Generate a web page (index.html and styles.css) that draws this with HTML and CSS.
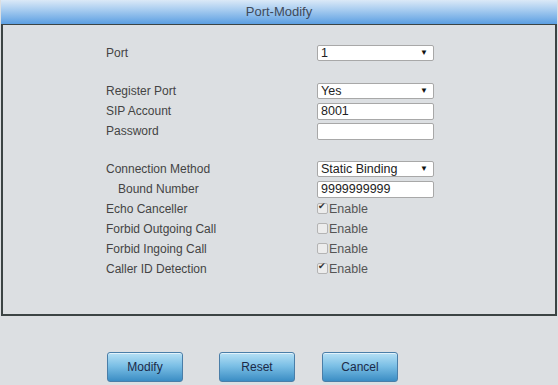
FILE: index.html
```html
<!DOCTYPE html>
<html lang="en">
<head>
  <meta charset="UTF-8" />
  <title>Port-Modify</title>
  <link rel="stylesheet" href="styles.css">
</head>
<body>

<div class="page">
  <div class="title-bar">Port-Modify</div>

  <div class="panel">
    <table class="form-table">
      <tr>
        <td class="lbl">Port</td>
        <td>
          <span class="sel"><select><option>1</option></select></span>
        </td>
      </tr>
      <tr class="spacer"><td colspan="2"></td></tr>
      <tr>
        <td class="lbl">Register Port</td>
        <td><span class="sel"><select><option>Yes</option></select></span></td>
      </tr>
      <tr>
        <td class="lbl">SIP Account</td>
        <td><input type="text" value="8001"></td>
      </tr>
      <tr>
        <td class="lbl">Password</td>
        <td><input type="password" value=""></td>
      </tr>
      <tr class="spacer"><td colspan="2"></td></tr>
      <tr>
        <td class="lbl">Connection Method</td>
        <td><span class="sel"><select><option>Static Binding</option></select></span></td>
      </tr>
      <tr>
        <td class="lbl sub">Bound Number</td>
        <td><input type="text" value="9999999999"></td>
      </tr>
      <tr>
        <td class="lbl">Echo Canceller</td>
        <td class="opt"><span class="chk on"></span>Enable</td>
      </tr>
      <tr>
        <td class="lbl">Forbid Outgoing Call</td>
        <td class="opt"><span class="chk"></span>Enable</td>
      </tr>
      <tr>
        <td class="lbl">Forbid Ingoing Call</td>
        <td class="opt"><span class="chk"></span>Enable</td>
      </tr>
      <tr>
        <td class="lbl">Caller ID Detection</td>
        <td class="opt"><span class="chk on"></span>Enable</td>
      </tr>
    </table>
  </div>

  <div class="buttons">
    <button class="btn">Modify</button>
    <button class="btn btn-reset">Reset</button>
    <button class="btn btn-cancel">Cancel</button>
  </div>
</div>

</body>
</html>
```

FILE: styles.css
```css
body {
  margin: 0;
  background: #dcdfe2;
  font-family: "Liberation Sans", Arial, sans-serif;
  font-size: 12px;
  color: #444;
}

.page {
  width: 556px;
  margin: 0 1px;
}

/* Header */
.title-bar {
  height: 24px;
  line-height: 24px;
  text-align: center;
  font-size: 13px;
  color: #3f4a5a;
  background: linear-gradient(to bottom, #dbe9f7, #a9cdf0 40%, #5c9fe2);
}

.panel {
  border: 2px solid #3c4444;
  border-top-width: 1px;
  padding: 18px 0 0 103px;
  box-sizing: border-box;
  height: 292px;
}

.form-table {
  border-collapse: collapse;
}

.form-table td {
  padding: 0;
  height: 20px;
  vertical-align: middle;
}

.form-table .spacer td {
  height: 18px;
}

.lbl {
  width: 211px;
  color: #444;
}

.lbl.sub {
  text-indent: 12px;
}

.opt {
  color: #555;
  font-size: 12.5px;
}

input {
  width: 117px;
  height: 17px;
  box-sizing: border-box;
  border: 1px solid #a8a8a8;
  border-radius: 2px;
  background: white;
  font-family: "Liberation Sans", Arial, sans-serif;
  font-size: 12.5px;
  color: #222;
  padding: 0 3px;
  margin: 0;
  display: block;
}

.sel {
  position: relative;
  display: block;
  width: 117px;
}

.sel select {
  appearance: none;
  -webkit-appearance: none;
  width: 117px;
  height: 16px;
  border: 1px solid #a8a8a8;
  border-radius: 2px;
  background: white;
  font-family: "Liberation Sans", Arial, sans-serif;
  font-size: 12.5px;
  color: #222;
  padding: 0 3px;
  margin: 0;
  display: block;
}

.sel::after {
  content: "\25BC";
  position: absolute;
  right: 6px;
  top: 3px;
  font-size: 8px;
  color: #111;
  pointer-events: none;
}

.chk {
  display: inline-block;
  width: 9px;
  height: 9px;
  border: 1px solid #b4b4b4;
  border-radius: 2px;
  background: #ececec;
  vertical-align: -1px;
  margin-right: 1px;
  position: relative;
}

.chk.on::after {
  content: "\2714";
  position: absolute;
  left: 0;
  top: -3px;
  font-size: 9px;
  color: #333;
}

.buttons {
  display: flex;
  padding: 36px 0 0 106px;
}

.btn {
  width: 76px;
  height: 30px;
  border: 1px solid #4a7ea8;
  border-radius: 3px;
  background: linear-gradient(to bottom, #b6e0f5, #7cc0e6 45%, #3b8dc4);
  font-family: "Liberation Sans", Arial, sans-serif;
  font-size: 12px;
  color: #1c2a48;
  cursor: pointer;
  box-shadow: inset 0 1px 0 rgba(255,255,255,0.6);
}

.btn-reset {
  margin-left: 36px;
}

.btn-cancel {
  margin-left: 27px;
}
```
